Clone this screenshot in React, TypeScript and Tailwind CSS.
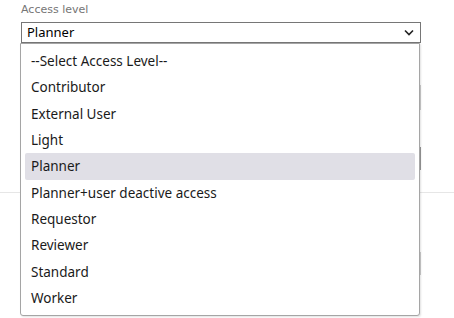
import React from "react";

const items = [
  "--Select Access Level--",
  "Contributor",
  "External User",
  "Light",
  "Planner",
  "Planner+user deactive access",
  "Requestor",
  "Reviewer",
  "Standard",
  "Worker",
];

export default function App() {
  return (
    <div className="relative w-[454px] h-[318px] overflow-hidden bg-white" style={{ fontFamily: '"Noto Sans", sans-serif' }}>
      <div className="pl-[21px] pt-[3px]">
        <div className="text-[11px] leading-[14px] text-[#757575]" style={{ fontFamily: '"DejaVu Sans", sans-serif' }}>
          Access level
        </div>
        <div className="mt-[5px] w-[400px] h-[21px] border border-[#767676] flex items-center justify-between pl-[5px] pr-[5px]">
          <span className="text-[13px] text-black leading-none">Planner</span>
          <svg width="10" height="7" viewBox="0 0 10 7" className="mr-[1px]">
            <path d="M1 1.5 L5 5.5 L9 1.5" stroke="#222" strokeWidth="1.6" fill="none" />
          </svg>
        </div>
        <div className="mt-[42px] w-[400px] h-[25px] border border-[#cfcfcf]" />
        <div className="mt-[37px] w-[400px] h-[23px] border border-[#9a9a9a]" />
        <div className="mt-[22px] -ml-[21px] w-[454px] h-[1px] bg-[#e6e6e6]" />
        <div className="mt-[59px] w-[400px] h-[23px] border border-[#cfcfcf]" />
      </div>

      <div className="absolute left-[20px] top-[43px] w-[400px] h-[273px] bg-white border border-[#a5a5a5] rounded-b-[3px] shadow-[1px_1px_2px_rgba(0,0,0,0.12)] px-[4px] pt-[4px]">
        {items.map((t) => (
          <div
            key={t}
            className={
              "h-[26.33px] flex items-center pl-[6px] text-[13.5px] text-[#1a1a1a] rounded-[2px] " +
              (t === "Planner" ? "bg-[#e0dfe6]" : "")
            }
          >
            {t}
          </div>
        ))}
      </div>
    </div>
  );
}
